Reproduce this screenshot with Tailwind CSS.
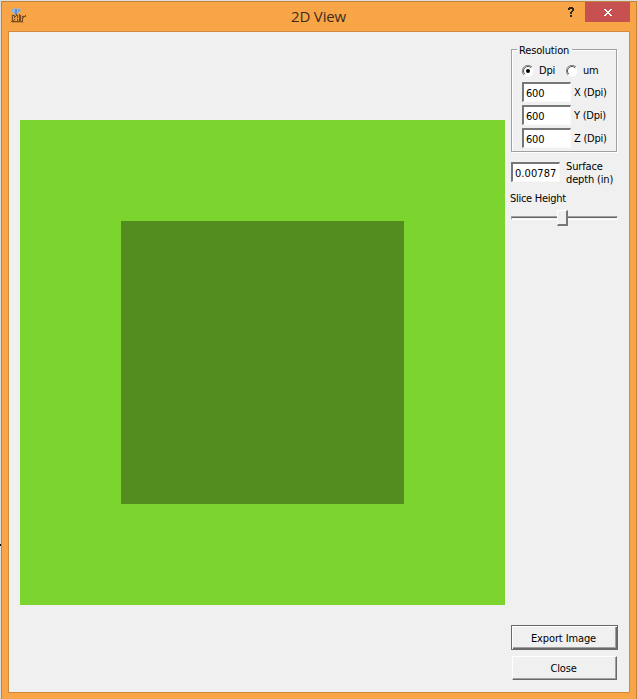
<!DOCTYPE html>
<html lang="en">
<head>
<meta charset="utf-8">
<title>2D View</title>
<script src="https://cdn.jsdelivr.net/npm/@tailwindcss/browser@4"></script>
</head>
<body class="relative h-[699px] w-[637px] overflow-hidden bg-[#dedede] pt-px pl-px font-['DejaVu_Sans_Condensed','DejaVu_Sans',sans-serif] text-[11px] leading-[13px] text-black">
<div class="absolute top-[544px] left-0 h-[2px] w-px bg-black"></div>
<main class="flex h-[698px] w-[636px] flex-col border-x border-t border-[#c1823c] bg-[#f8a548] px-[6px]">
  <header class="relative flex h-[29px] shrink-0 justify-center">
    <svg class="absolute top-[5px] left-[2px] h-[17px] w-[17px]" viewBox="0 0 17 17">
      <path d="M2 2l2-1 2 1 3-1 2 2-1 2-2 1v2H4V6L2 5z" fill="#93b4dc"/>
      <path d="M5 2h2v6H5zM8 3h2v1H8z" fill="#5e8fcb"/>
      <path d="M1 7h4v2H3v6H1zM4 9h2v6H3v-2h1zM6 7h4v8H6v-1h1V9H6zM10 8h6v2h-2l-1 2v3h-3z" fill="#7a4e20"/>
      <path d="M1 7h4v1H2v6H1zM5 10h1v4H4v-1h1zM7 7h2v7H8V8H7zM11 8h4v1h-3v5h-1zM3 11h5v1H3z" fill="#e59a38"/>
      <path d="M2 15h12v1H2z" fill="#d18735"/>
    </svg>
    <h1 class="mt-[4px] -ml-px font-['Open_Sans',sans-serif] text-[15px] leading-[20px] tracking-[-0.15px] text-[#3d2c1b]">2D View</h1>
    <svg class="absolute top-[5px] left-[560px]" width="7" height="11" viewBox="0 0 7 11" shape-rendering="crispEdges"><path d="M1 0h4v1h1v3H5v1H4v2H2V5h1V4h1V2H2v1H0V1h1zM2 8h2v2H2z" fill="#302820"/></svg>
    <div class="absolute top-0 right-0 flex h-[20px] w-[45px] items-center justify-center bg-[#c75050]">
      <svg class="mt-px" width="8" height="7" viewBox="0 0 8 7" shape-rendering="crispEdges"><path d="M0 0h2v1h1v1h2V1h1V0h2v1H7v1H6v1H5v1h1v1h1v1h1v1H6V6H5V5H3v1H2v1H0V6h1V5h1V4h1V3H2V2H1V1H0z" fill="#fff"/></svg>
    </div>
  </header>
  <section class="flex h-[662px] w-[622px] shrink-0 border border-[#d18b3e] bg-[#f0f0f0]">
    <div class="mt-[88px] ml-[11px] h-[485px] w-[485px] shrink-0 bg-[#7cd42e] pt-[101px] pl-[101px]">
      <div class="h-[283px] w-[283px] bg-[#538d1f]"></div>
    </div>
    <aside class="ml-[6px] flex w-[108px] flex-col">
      <fieldset class="relative mt-[17px] h-[103px] w-[106px] border border-[#a0a0a0] shadow-[1px_1px_0_#fff,inset_1px_1px_0_#fff]">
        <span class="absolute top-[-6px] left-[5px] h-[13px] w-[55px] bg-[#f0f0f0] pl-[2px] whitespace-nowrap tracking-[-0.15px]">Resolution</span>
        <div class="mt-[14px] ml-[10px] flex h-[13px] items-center">
          <svg class="shrink-0" width="12" height="12" viewBox="0 0 12 12"><circle cx="6" cy="6" r="5.5" fill="#fff"/><path d="M2 10A5.5 5.5 0 0 1 10 2" fill="none" stroke="#808080"/><path d="M2.8 9.2A4.5 4.5 0 0 1 9.2 2.8" fill="none" stroke="#555"/><circle cx="6" cy="6" r="2" fill="#000"/></svg>
          <span class="ml-[5px] w-[26px] tracking-[-0.2px]">Dpi</span>
          <svg class="ml-px shrink-0" width="12" height="12" viewBox="0 0 12 12"><circle cx="6" cy="6" r="5.5" fill="#fff"/><path d="M2 10A5.5 5.5 0 0 1 10 2" fill="none" stroke="#808080"/><path d="M2.8 9.2A4.5 4.5 0 0 1 9.2 2.8" fill="none" stroke="#555"/></svg>
          <span class="ml-[5px] tracking-[-0.2px]">um</span>
        </div>
        <div class="mt-[5px] ml-[10px] flex flex-col gap-[3px]">
          <div class="flex h-[20px] items-center"><div class="h-[20px] w-[49px] shrink-0 border-t-2 border-r border-b border-l-2 border-t-[#777] border-r-[#fafafa] border-b-[#fafafa] border-l-[#777] bg-white pt-[3px] pl-[2px] tracking-[-0.2px]">600</div><span class="ml-[3px] whitespace-nowrap tracking-[-0.25px]">X (Dpi)</span></div>
          <div class="flex h-[20px] items-center"><div class="h-[20px] w-[49px] shrink-0 border-t-2 border-r border-b border-l-2 border-t-[#777] border-r-[#fafafa] border-b-[#fafafa] border-l-[#777] bg-white pt-[3px] pl-[2px] tracking-[-0.2px]">600</div><span class="ml-[3px] whitespace-nowrap tracking-[-0.25px]">Y (Dpi)</span></div>
          <div class="flex h-[20px] items-center"><div class="h-[20px] w-[49px] shrink-0 border-t-2 border-r border-b border-l-2 border-t-[#777] border-r-[#fafafa] border-b-[#fafafa] border-l-[#777] bg-white pt-[3px] pl-[2px] tracking-[-0.2px]">600</div><span class="ml-[3px] whitespace-nowrap tracking-[-0.25px]">Z (Dpi)</span></div>
        </div>
      </fieldset>
      <div class="mt-[9px] flex h-[26px]">
        <div class="mt-[1px] h-[20px] w-[49px] shrink-0 border-t-2 border-r border-b border-l-2 border-t-[#777] border-r-[#fafafa] border-b-[#fafafa] border-l-[#777] bg-white pt-[3px] pl-[2px] tracking-[0.08px]">0.00787</div>
        <span class="-mt-px ml-[6px] whitespace-nowrap tracking-[-0.15px]">Surface<br>depth (in)</span>
      </div>
      <div class="mt-[5px] -ml-px whitespace-nowrap tracking-[-0.28px]">Slice Height</div>
      <div class="relative mt-[11px] h-[4px] w-[107px] border-t border-r border-b border-l border-t-[#a0a0a0] border-r-white border-b-white border-l-[#a0a0a0] bg-[#f0f0f0]">
        <div class="h-px w-full bg-[#696969]"></div>
        <div class="absolute top-[-7px] left-[45px] h-[16px] w-[11px] border-t border-r-2 border-b-2 border-l border-t-white border-r-[#777] border-b-[#777] border-l-white bg-[#f0f0f0]"></div>
      </div>
      <button class="mt-[405px] h-[25px] w-[107px] shrink-0 border border-[#696969] pt-px text-center tracking-[-0.12px] shadow-[inset_1px_1px_0_#fff,inset_-1px_-1px_0_#696969,inset_-2px_-2px_0_#a0a0a0]"><span class="-ml-[2px]">Export Image</span></button>
      <button class="mt-[6px] ml-px h-[24px] w-[105px] shrink-0 border-t border-r border-b border-l border-t-white border-r-[#696969] border-b-[#696969] border-l-white pt-px text-center tracking-[-0.15px] shadow-[inset_-1px_-1px_0_#a0a0a0]"><span class="-ml-[2px]">Close</span></button>
    </aside>
  </section>
</main>
</body>
</html>
